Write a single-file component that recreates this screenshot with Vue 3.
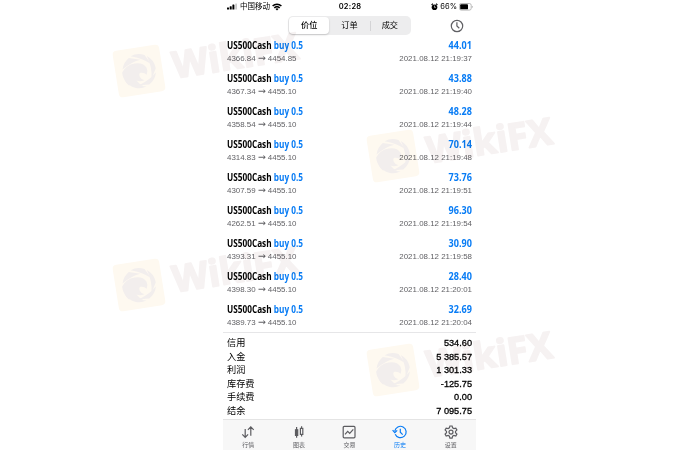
<template>
  <div class="page">
    <div class="phone">
      <div class="status">
        <div class="status-left">
          <svg width="11" height="7" viewBox="0 0 11 7">
            <rect x="0" y="4.4" width="2" height="2.2" rx=".4"/>
            <rect x="2.7" y="3.3" width="2" height="3.3" rx=".4"/>
            <rect x="5.4" y="1.6" width="2" height="5" rx=".4"/>
            <rect x="8.3" y="0.4" width="1.6" height="6.2" rx=".4" fill="#c4c4c4"/>
          </svg>
          <span class="carrier">中国移动</span>
          <svg width="10" height="8" viewBox="0 0 10 8" fill="none" stroke="#000" stroke-width="1.5">
            <path d="M.6 3A6.3 6.3 0 0 1 9.4 3"/>
            <path d="M2.3 4.9a3.9 3.9 0 0 1 5.4 0"/>
            <path d="M3.5 5.9a2.2 2.2 0 0 1 3 0L5 7.6z" fill="#000" stroke="none"/>
          </svg>
        </div>
        <div class="clock">02:28</div>
        <div class="status-right">
          <svg width="7" height="8" viewBox="0 0 7 8">
            <circle cx="3.5" cy="4.2" r="2.8"/>
            <path d="M.5 1.9L2 .8M6.5 1.9L5 .8" stroke="#000" stroke-width="1.1"/>
            <path d="M3.5 2.6v1.8h1.3" stroke="#fff" stroke-width=".6" fill="none"/>
          </svg>
          <span class="percent">66%</span>
          <svg width="14" height="8" viewBox="0 0 14 8">
            <rect x=".4" y=".5" width="11.8" height="6.6" rx="1.8" fill="none" stroke="#aaa" stroke-width=".8"/>
            <rect x="1.2" y="1.3" width="7.8" height="5" rx=".9"/>
            <path d="M12.9 2.7v2.2q.9-.4.9-1.1t-.9-1.1" fill="#aaa"/>
          </svg>
        </div>
      </div>

      <div class="toolbar">
        <div class="segments">
          <div class="segment active">价位</div>
          <div class="segment">订单</div>
          <div class="segment divided">成交</div>
        </div>
        <svg class="history-btn" width="14" height="14" viewBox="0 0 14 14" fill="none" stroke="#606064" stroke-width="1.2">
          <circle cx="7" cy="7" r="5.7"/>
          <path d="M6.9 3.2V7l2.4 2.3"/>
        </svg>
      </div>

      <div class="deals">
        <div v-for="deal in deals" :key="deal.time" class="deal">
          <div class="deal-line">
            <svg width="77" height="14" class="condensed">
              <text x="0" y="11" textLength="76" lengthAdjust="spacingAndGlyphs">US500Cash <tspan class="blue">buy 0.5</tspan></text>
            </svg>
            <svg width="24" height="14" class="condensed">
              <text x="0.6" y="11" textLength="23.3" lengthAdjust="spacingAndGlyphs" class="blue">{{ deal.profit }}</text>
            </svg>
          </div>
          <div class="deal-line detail">
            <span>{{ deal.open }} <span class="arrow">→</span> {{ deal.close }}</span>
            <span>2021.08.12 {{ deal.time }}</span>
          </div>
        </div>
      </div>

      <div class="summary">
        <div v-for="row in summary" :key="row.label" class="summary-row">
          <span>{{ row.label }}</span>
          <span class="amount">{{ row.value }}</span>
        </div>
      </div>

      <div class="tabbar">
        <div class="tab">
          <svg width="16" height="16" viewBox="0 0 16 16">
            <path d="M5.2 5v8.3M2.3 10.4l2.9 2.9 2.9-2.9M10.8 11.8V2.9M7.9 5.8l2.9-2.9 2.9 2.9"/>
          </svg>
          <span>行情</span>
        </div>
        <div class="tab">
          <svg width="16" height="16" viewBox="0 0 16 16">
            <path d="M5.6 3v10.8M10.6 2.2v2M10.6 10.5v2"/>
            <rect x="4.5" y="5.8" width="2.2" height="5.6" fill="currentColor"/>
            <rect x="9.4" y="4.4" width="2.4" height="6"/>
          </svg>
          <span>图表</span>
        </div>
        <div class="tab">
          <svg width="16" height="16" viewBox="0 0 16 16">
            <rect x="2.2" y="2.4" width="11.8" height="11.4" rx="1"/>
            <path d="M4 10.4l2.7-3 2 2 3.6-4"/>
          </svg>
          <span>交易</span>
        </div>
        <div class="tab current">
          <svg width="16" height="16" viewBox="0 0 16 16">
            <path d="M3.2 10.2A5.7 5.7 0 1 0 2.8 7.2M.6 6.2l2.2 2.4 2.4-2.2M8.3 4.8v3.5l2.4 2.3"/>
          </svg>
          <span>历史</span>
        </div>
        <div class="tab">
          <svg width="16" height="16" viewBox="0 0 16 16">
            <path d="M6.9 2h2.2l.5 1.9 1.3.7 1.9-.5 1.1 1.9-1.4 1.4v1.4l1.4 1.3-1.1 1.9-1.9-.5-1.3.7-.5 1.9H6.9l-.5-1.9-1.3-.7-1.9.5-1.1-1.9 1.4-1.3V7.4L2.1 6l1.1-1.9 1.9.5 1.3-.7z"/>
            <circle cx="8" cy="8.1" r="2"/>
          </svg>
          <span>设置</span>
        </div>
      </div>
    </div>

    <svg class="watermarks" width="700" height="450" viewBox="0 0 700 450">
      <g v-for="(mark, i) in marks" :key="i" :transform="`translate(${mark.x} ${mark.y}) rotate(-9)`">
        <rect x="-23.5" y="-23.5" width="47" height="47" rx="4" fill="#fef9f0"/>
        <g fill="#f2eeed">
          <!-- shutter ring -->
          <path d="M-16-4A17 17 0 0 1-8-14.500L3-11Q-7-10-16-4z"/>
          <path d="M-6-16A17 17 0 0 1 8-15L13-5Q6-12-6-16z"/>
          <path d="M10-13.500A17 17 0 0 1 17 0L11 10Q14-2 10-13.500z"/>
          <path d="M16.500 4A17 17 0 0 1 8 15L-2 14Q9 11 16.500 4z"/>
          <path d="M5 16.500A17 17 0 0 1-15 8L-13 3Q-7 14 5 16.500z"/>
          <!-- eagle head -->
          <path d="M-17-1Q-12-8-3-8Q5-8 8-2Q9 1 7 5Q5 2 1 2Q-1 3 0 6Q1 9 4 10Q-1 11-4 9Q-2 13 2 15Q-7 15-10 9Q-12 12-12 13Q-17 7-17-1z"/>
        </g>
        <text x="34" y="13" textLength="127" lengthAdjust="spacingAndGlyphs">WikiFX</text>
      </g>
    </svg>
  </div>
</template>

<script setup>
const deals = [
  { open: '4366.84', close: '4454.85', profit: '44.01', time: '21:19:37' },
  { open: '4367.34', close: '4455.10', profit: '43.88', time: '21:19:40' },
  { open: '4358.54', close: '4455.10', profit: '48.28', time: '21:19:44' },
  { open: '4314.83', close: '4455.10', profit: '70.14', time: '21:19:48' },
  { open: '4307.59', close: '4455.10', profit: '73.76', time: '21:19:51' },
  { open: '4262.51', close: '4455.10', profit: '96.30', time: '21:19:54' },
  { open: '4393.31', close: '4455.10', profit: '30.90', time: '21:19:58' },
  { open: '4398.30', close: '4455.10', profit: '28.40', time: '21:20:01' },
  { open: '4389.73', close: '4455.10', profit: '32.69', time: '21:20:04' }
]

const summary = [
  { label: '信用', value: '534.60' },
  { label: '入金', value: '5 385.57' },
  { label: '利润', value: '1 301.33' },
  { label: '库存费', value: '-125.75' },
  { label: '手续费', value: '0.00' },
  { label: '结余', value: '7 095.75' }
]

const marks = [
  { x: 139, y: 71 },
  { x: 393, y: 156 },
  { x: 139, y: 285 },
  { x: 393, y: 370 }
]
</script>

<style>
body { margin: 0; background: #fff; }
</style>

<style scoped>
.page {
  position: relative;
  width: 700px;
  height: 450px;
  overflow: hidden;
  background: #fff;
  font-family: 'Liberation Sans', 'Noto Sans CJK SC', sans-serif;
  color: #000;
}

.phone {
  width: 253px;
  height: 450px;
  margin-left: 223px;
  display: flex;
  flex-direction: column;
}

.status {
  height: 13px;
  display: grid;
  grid-template-columns: 1fr auto 1fr;
  align-items: center;
  padding: 0 3px 0 4px;
  font-size: 7.5px;
  line-height: 13px;
}

.status-left, .status-right {
  display: flex;
  align-items: center;
  gap: 2px;
}

.status-right { justify-content: flex-end; }

.clock {
  font-family: Inter, sans-serif;
  font-weight: 600;
  font-size: 7.5px;
  letter-spacing: 0.25px;
}

.percent {
  font-family: Inter, sans-serif;
  font-size: 7.5px;
}

.toolbar {
  height: 25px;
  display: grid;
  grid-template-columns: 1fr 123px 1fr;
  align-items: center;
}

.segments {
  grid-column: 2;
  height: 19px;
  box-sizing: border-box;
  padding: 1px;
  display: flex;
  background: #ededee;
  border-radius: 5px;
}

.segment {
  flex: 1;
  font-size: 8.2px;
  line-height: 18px;
  text-align: center;
}

.segment.active {
  background: #fff;
  border-radius: 4px;
  box-shadow: 0 1px 2px rgba(0, 0, 0, 0.18);
  font-weight: 500;
}

.segment.divided {
  background: linear-gradient(#d4d4d6, #d4d4d6) left center / 1px 10px no-repeat;
}

.history-btn {
  justify-self: end;
  margin-right: 12px;
}

.deals {
  height: 294px;
  border-bottom: 1px solid #e6e6e8;
}

.deal { height: 33px; }

.deal-line {
  display: flex;
  justify-content: space-between;
  padding: 0 4px;
}

.condensed {
  display: block;
  overflow: visible;
  font-family: 'Open Sans', sans-serif;
  font-weight: 700;
  font-size: 10.8px;
}

.blue { fill: #087cf5; }

.detail {
  font-size: 7.93px;
  line-height: 14px;
  color: #626266;
}

.arrow {
  display: inline-block;
  width: 7.8px;
  font-family: 'DejaVu Sans', sans-serif;
  font-size: 9.5px;
  line-height: 10px;
}

.summary {
  height: 86px;
  box-sizing: border-box;
  padding: 3px 4px 0;
}

.summary-row {
  height: 13.5px;
  display: flex;
  justify-content: space-between;
  font-size: 9.2px;
  line-height: 14.5px;
}

.amount {
  -webkit-text-stroke: 0.3px #000;
}

.tabbar {
  flex: 1;
  display: flex;
  background: #f7f7f7;
  border-top: 1px solid #e4e4e4;
}

.tab {
  flex: 1;
  display: flex;
  flex-direction: column;
  align-items: center;
  padding-top: 4px;
  font-size: 6px;
  line-height: 10px;
  color: #5c5c60;
}

.tab svg {
  fill: none;
  stroke: currentColor;
  stroke-width: 1.2;
}

.tab.current { color: #087cf5; }

.watermarks {
  position: absolute;
  left: 0;
  top: 0;
  pointer-events: none;
  mix-blend-mode: multiply;
}

.watermarks text {
  font-family: 'Open Sans', sans-serif;
  font-weight: 700;
  font-size: 37px;
  fill: #f6f2f2;
  stroke: #f6f2f2;
  stroke-width: 1.8px;
  stroke-linejoin: round;
}
</style>
